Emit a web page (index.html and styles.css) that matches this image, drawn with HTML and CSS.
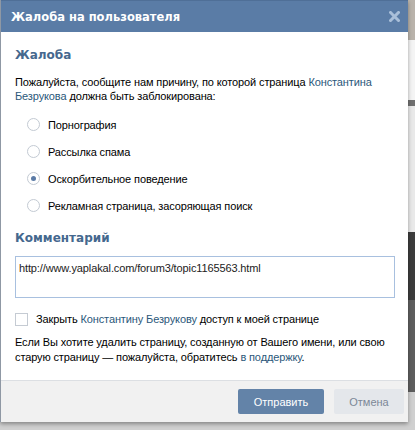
FILE: index.html
```html
<!DOCTYPE html>
<html lang="ru">
<head>
<meta charset="utf-8">
<title>Жалоба на пользователя</title>
<link rel="stylesheet" href="styles.css">
</head>
<body>
<div class="dialog">
  <div class="header">
    <span class="title">Жалоба на пользователя</span>
    <svg class="close" width="11" height="11" viewBox="0 0 11 11"><path d="M1.5 1.5 L9.5 9.5 M9.5 1.5 L1.5 9.5" stroke="#a9bfd9" stroke-width="3" stroke-linecap="square"/></svg>
  </div>
  <div class="content">
    <h2 class="heading">Жалоба</h2>
    <p class="text">Пожалуйста, сообщите нам причину, по которой страница <a class="link">Константина</a> <a class="link">Безрукова</a> должна быть заблокирована:</p>
    <div class="reasons">
      <div class="radio-row"><span class="radio"></span>Порнография</div>
      <div class="radio-row"><span class="radio"></span>Рассылка спама</div>
      <div class="radio-row"><span class="radio checked"></span>Оскорбительное поведение</div>
      <div class="radio-row"><span class="radio"></span>Рекламная страница, засоряющая поиск</div>
    </div>
    <h2 class="heading comment-h">Комментарий</h2>
    <div class="textarea">http://www.yaplakal.com/forum3/topic1165563.html</div>
    <div class="check-row"><span class="checkbox"></span>Закрыть <a class="link">Константину Безрукову</a>&nbsp;доступ к моей странице</div>
    <p class="text note">Если Вы хотите удалить страницу, созданную от Вашего имени, или свою<br>старую страницу — пожалуйста, обратитесь <a class="link">в поддержку</a>.</p>
  </div>
  <div class="footer">
    <button class="btn primary">Отправить</button>
    <button class="btn secondary">Отмена</button>
  </div>
</div>
</body>
</html>
```
FILE: styles.css
```css
html, body {
  margin: 0;
  padding: 0;
}
body {
  width: 415px;
  height: 430px;
  overflow: hidden;
  font-family: "Liberation Sans", Arial, sans-serif;
  background: linear-gradient(to bottom,
    #b9b3ab 0, #b9b3ab 40px,
    #f4f4f4 40px, #f4f4f4 100px,
    #707070 100px, #707070 106px,
    #e9e9e9 106px, #e9e9e9 232px,
    #3c3c3c 232px, #3c3c3c 300px,
    #5e5e5e 300px, #5e5e5e 392px,
    #d0d0d0 392px, #d0d0d0 430px);
}
.dialog {
  width: 408px;
  box-sizing: border-box;
  border-left: 1px solid #8f98a4;
  background: #fff;
  box-shadow: 0 2px 4px rgba(0,0,0,0.35);
}
.header {
  height: 32px;
  background: #5a7ca6;
  border-top: 1px solid #4f6f97;
  box-sizing: border-box;
  display: flex;
  align-items: center;
  justify-content: space-between;
  padding: 0 8px 0 10px;
}
.title {
  color: #fff;
  font-family: "DejaVu Sans", sans-serif;
  font-weight: bold;
  font-size: 11.5px;
}
.close {
  display: block;
}
.content {
  padding: 15px 12px 15px 14px;
  letter-spacing: -0.12px;
}
.heading {
  margin: 0;
  font-family: "DejaVu Sans", sans-serif;
  font-size: 12px;
  line-height: 16px;
  font-weight: bold;
  color: #45688e;
  letter-spacing: 0;
}
.text {
  margin: 12px 0 0;
  font-size: 11px;
  line-height: 14px;
  color: #000;
}
.link {
  color: #2b587a;
  text-decoration: none;
}
.reasons {
  margin-top: 8px;
  padding-left: 12px;
}
.radio-row {
  height: 27px;
  display: flex;
  align-items: center;
  font-size: 11px;
  color: #000;
}
.radio {
  width: 13px;
  height: 13px;
  box-sizing: border-box;
  border: 1px solid #c3cad3;
  border-radius: 50%;
  background: #fff;
  margin-right: 8px;
  display: flex;
  align-items: center;
  justify-content: center;
}
.radio.checked::after {
  content: "";
  width: 5px;
  height: 5px;
  border-radius: 50%;
  background: #5b7ba6;
}
.comment-h {
  margin-top: 11px;
}
.textarea {
  margin-top: 10px;
  width: 380px;
  height: 42px;
  box-sizing: border-box;
  border: 1px solid #a8c0df;
  padding: 4px 3px;
  font-size: 11px;
  line-height: 14px;
  color: #222;
}
.check-row {
  margin-top: 14px;
  display: flex;
  align-items: center;
  font-size: 11px;
  line-height: 14px;
  color: #000;
  white-space: pre;
}
.checkbox {
  width: 13px;
  height: 13px;
  box-sizing: border-box;
  border: 1px solid #c5cbd3;
  background: #fff;
  margin-right: 8px;
}
.note {
  margin-top: 9px;
  line-height: 15px;
}
.footer {
  height: 42px;
  box-sizing: border-box;
  border-top: 1px solid #dcdfe3;
  background: #f1f1f1;
  display: flex;
  justify-content: flex-end;
  align-items: flex-start;
  gap: 10px;
  padding: 8px 4px 0 0;
}
.btn {
  height: 25px;
  border: 0;
  border-radius: 2px;
  font-family: "Liberation Sans", Arial, sans-serif;
  font-size: 11px;
  padding: 0;
}
.primary {
  width: 86px;
  background: #6383a8;
  color: #fff;
}
.secondary {
  width: 70px;
  background: #e4e7eb;
  color: #7c8897;
}
```
